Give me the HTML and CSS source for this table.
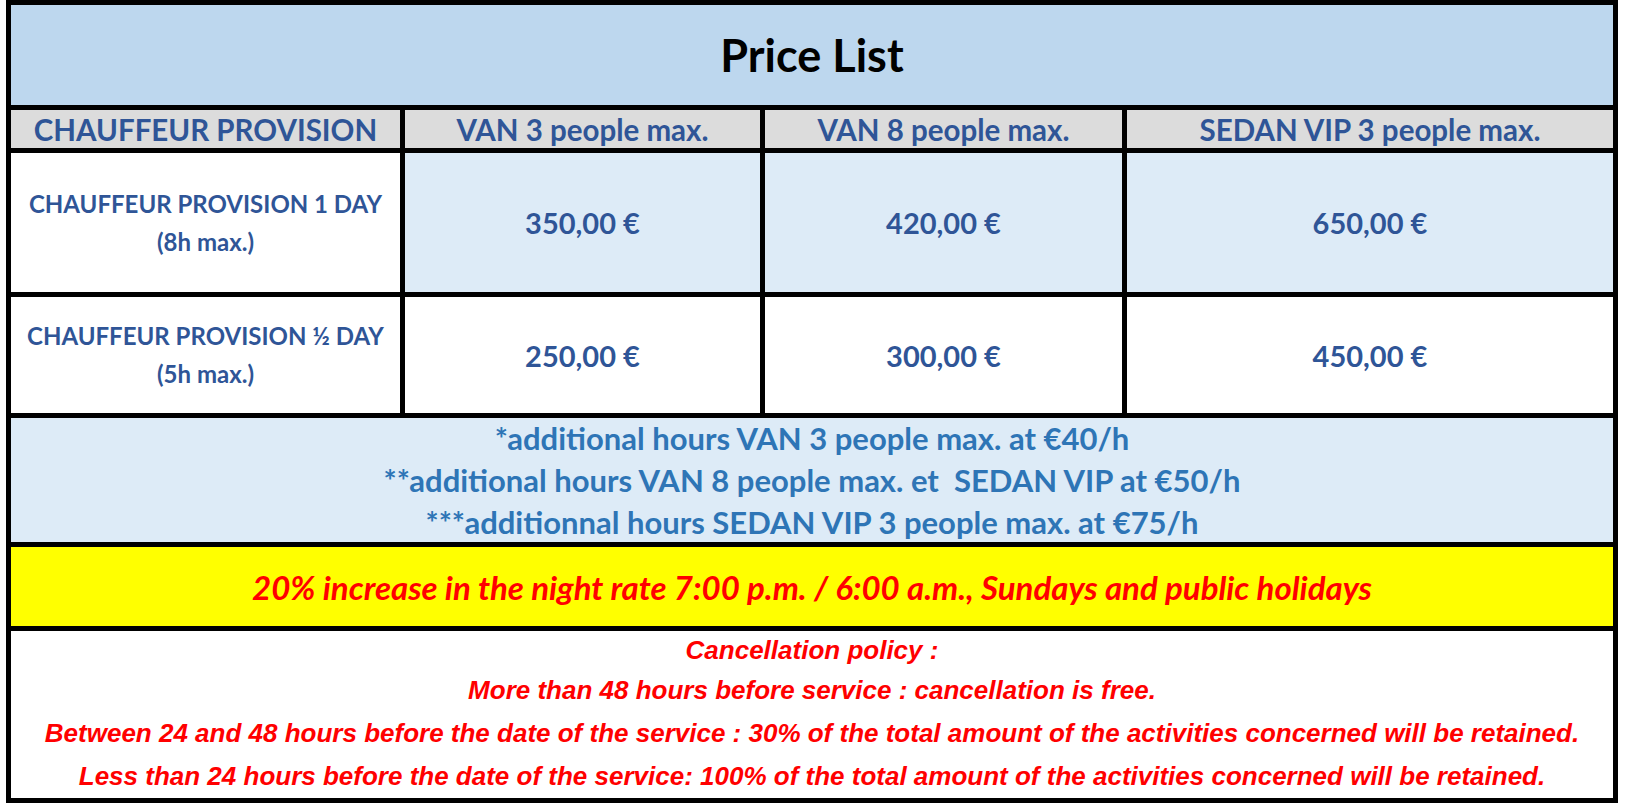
FILE: index.html
```html
<!DOCTYPE html>
<html lang="en">
<head>
<meta charset="utf-8">
<title>Price List</title>
<link rel="stylesheet" href="styles.css">
</head>
<body>
<div class="sheet">
  <div class="cell title">Price List</div>

  <div class="cell head">CHAUFFEUR PROVISION</div>
  <div class="cell head">VAN 3 people max.</div>
  <div class="cell head">VAN 8 people max.</div>
  <div class="cell head">SEDAN VIP 3 people max.</div>

  <div class="cell label">CHAUFFEUR PROVISION 1 DAY<br>(8h max.)</div>
  <div class="cell price tint">350,00 €</div>
  <div class="cell price tint">420,00 €</div>
  <div class="cell price tint">650,00 €</div>

  <div class="cell label">CHAUFFEUR PROVISION ½ DAY<br>(5h max.)</div>
  <div class="cell price">250,00 €</div>
  <div class="cell price">300,00 €</div>
  <div class="cell price">450,00 €</div>

  <div class="cell notes">
    <p>*additional hours VAN 3 people max. at €40/h</p>
    <p>**additional hours VAN 8 people max. et&nbsp; SEDAN VIP at €50/h</p>
    <p>***additionnal hours SEDAN VIP 3 people max. at €75/h</p>
  </div>

  <div class="cell night">20% increase in the night rate 7:00 p.m. / 6:00 a.m., Sundays and public holidays</div>

  <div class="cell policy">
    <p class="policy-title">Cancellation policy :</p>
    <p>More than 48 hours before service : cancellation is free.</p>
    <p>Between 24 and 48 hours before the date of the service : 30% of the total amount of the activities concerned will be retained.</p>
    <p>Less than 24 hours before the date of the service: 100% of the total amount of the activities concerned will be retained.</p>
  </div>
</div>
</body>
</html>
```

FILE: styles.css
```css
html, body {
  margin: 0;
  padding: 0;
  background: #ffffff;
}

body {
  font-family: Lato, "Open Sans", "Liberation Sans", sans-serif;
}

.sheet {
  margin-left: 6px;
  width: 1612px;
  box-sizing: border-box;
  background: #000000;
  padding: 5px;
  display: grid;
  grid-template-columns: 389px 355px 357px 486px;
  grid-template-rows: 100px 38px 139px 116px 124px 79px 167px;
  gap: 5px;
}

.cell {
  background: #ffffff;
  display: flex;
  align-items: center;
  justify-content: center;
  text-align: center;
  font-weight: 700;
  color: #2f5597;
}

.title {
  grid-column: 1 / -1;
  background: #bdd7ee;
  color: #000000;
  font-size: 45px;
}

.head {
  background: #dcdcdc;
  font-size: 29.5px;
}

.label {
  font-size: 24px;
  line-height: 38px;
}

.price {
  font-size: 29px;
}

.tint {
  background: #ddebf7;
}

.notes {
  grid-column: 1 / -1;
  background: #ddebf7;
  color: #2e75b6;
  flex-direction: column;
  font-size: 31px;
}

.notes p {
  margin: 0;
  line-height: 42px;
}

.night {
  grid-column: 1 / -1;
  background: #ffff00;
  color: #ff0000;
  font-style: italic;
  font-size: 33px;
}

.policy {
  grid-column: 1 / -1;
  flex-direction: column;
  justify-content: flex-start;
  color: #ff0000;
  font-family: "Liberation Sans", Arial, sans-serif;
  font-style: italic;
  font-size: 26px;
}

.policy p {
  margin: 0;
  line-height: 43px;
}

.policy .policy-title {
  line-height: 38px;
}
```
